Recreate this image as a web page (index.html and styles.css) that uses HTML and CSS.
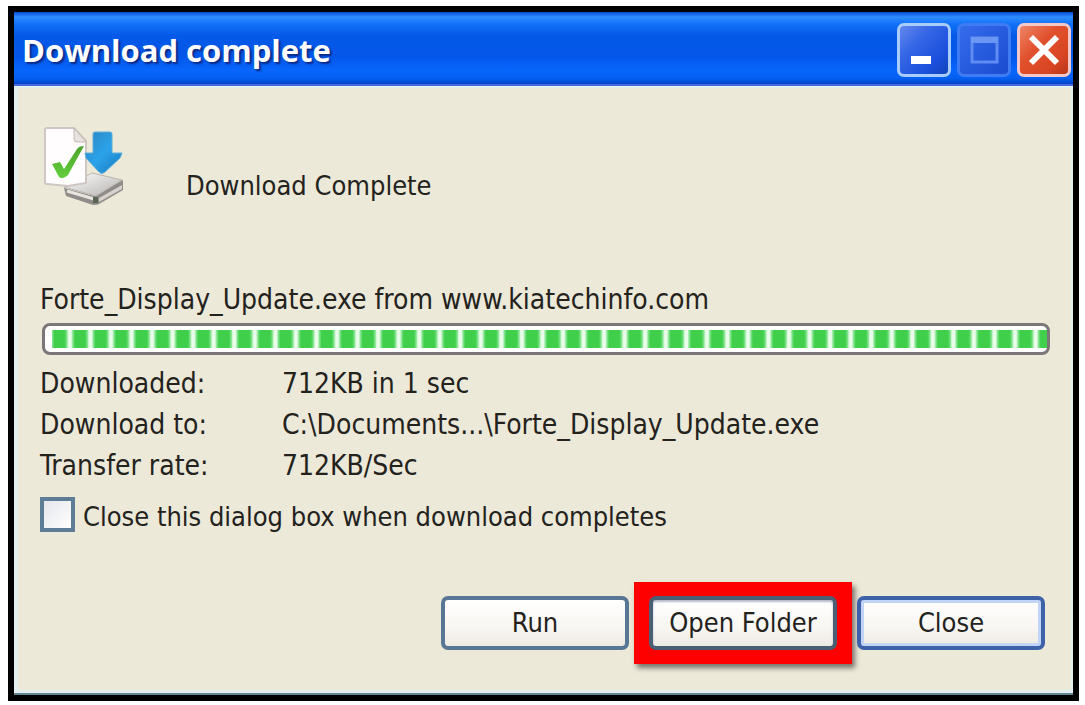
FILE: index.html
```html
<!DOCTYPE html>
<html lang="en">
<head>
<meta charset="utf-8">
<title>Download complete</title>
<link rel="stylesheet" href="styles.css">
</head>
<body>
<main class="window">
  <header class="titlebar">
    <h1 class="title">Download complete</h1>
    <div class="controls">
      <button class="control" type="button" aria-label="Minimize">
        <svg viewBox="0 0 42 42"><rect x="8" y="27" width="20" height="8" fill="#fff"/></svg>
      </button>
      <button class="control control-max" type="button" aria-label="Maximize" disabled>
        <svg viewBox="0 0 42 42"><rect x="9" y="9" width="25" height="24" fill="none" stroke="#5f8bf2" stroke-width="3"/><rect x="8" y="8" width="27" height="6" fill="#6a96f4"/></svg>
      </button>
      <button class="control control-close" type="button" aria-label="Close window">
        <svg viewBox="0 0 42 42"><path d="M8 8L34 34M34 8L8 34" stroke="#fff" stroke-width="6" fill="none"/></svg>
      </button>
    </div>
  </header>
  <div class="body">
    <section class="status">
      <svg class="status-icon" viewBox="0 0 84 84" aria-hidden="true">
        <defs>
          <linearGradient id="arrow" x1="0" y1="0" x2="1" y2="1"><stop offset="0" stop-color="#2c83bd"/><stop offset=".5" stop-color="#2ba3ea"/><stop offset="1" stop-color="#1b78bd"/></linearGradient>
          <linearGradient id="check" x1="0" y1="0" x2="0" y2="1"><stop offset="0" stop-color="#4da32c"/><stop offset="1" stop-color="#63cf3c"/></linearGradient>
          <linearGradient id="drive" x1="0" y1="0" x2="1" y2="1"><stop offset="0" stop-color="#ffffff"/><stop offset="1" stop-color="#b5b2b0"/></linearGradient>
        </defs>
        <path d="M22 64L52 72L81 56V66L57 80Q53 82 48 80L24 72Z" fill="#8f8b88"/>
        <path d="M22 63L50 49L80 56L54 72Z" fill="url(#drive)" stroke="#b9b3ae"/>
        <path d="M25 67L52 75" stroke="#e8e4e0" stroke-width="3"/>
        <path d="M57 74L80 61V65L57 78Z" fill="#d7d2ce"/>
        <rect x="51" y="73" width="5" height="6" fill="#596454"/>
        <path d="M3 6Q3 4 5 4H32L44 17V59L26 62L5 60Q3 60 3 58Z" fill="#fffdfd" stroke="#cfc5c2" stroke-width="2"/>
        <path d="M32 4V15Q32 18 35 18H44Z" fill="#e7e2df" stroke="#c2b8b4"/>
        <path d="M10 40L18 38L22 45L35 25Q37 22 42 22L26 51Q21 56 17 53Z" fill="url(#check)"/>
        <path d="M51 10Q51 8 53 8H68Q70 8 70 10V29H80L78 34L63 48Q60 51 57 48L44 34L43 29H51Z" fill="url(#arrow)" stroke="#5eafd9"/>
      </svg>
      <p class="status-text">Download Complete</p>
    </section>
    <label class="source" for="progress">Forte_Display_Update.exe from www.kiatechinfo.com</label>
    <progress class="progress" id="progress" value="100" max="100"></progress>
    <dl class="details">
      <dt>Downloaded:</dt><dd>712KB in 1 sec</dd>
      <dt>Download to:</dt><dd>C:\Documents...\Forte_Display_Update.exe</dd>
      <dt>Transfer rate:</dt><dd>712KB/Sec</dd>
    </dl>
    <div class="option">
      <input class="checkbox" type="checkbox" id="autoclose">
      <label for="autoclose">Close this dialog box when download completes</label>
    </div>
    <footer class="actions">
      <button class="button" type="button">Run</button>
      <div class="highlight"><button class="button button-open" type="button">Open Folder</button></div>
      <button class="button button-default" type="button">Close</button>
    </footer>
  </div>
</main>
</body>
</html>
```
FILE: styles.css
```css
* {
  box-sizing: border-box;
}

body {
  margin: 0;
  padding: 6px 6px 4px 8px;
  min-height: 100vh;
  display: flex;
  background: #fff;
  color: #24221d;
  font-family: "DejaVu Sans Condensed", "DejaVu Sans", sans-serif;
  font-size: 27px;
  line-height: 40px;
}

.window {
  flex: 1;
  display: flex;
  flex-direction: column;
  border: 6px solid #000;
  background: #ece9d8;
}

.titlebar {
  display: flex;
  align-items: center;
  justify-content: space-between;
  height: 74px;
  padding: 4px 2px 0 8px;
  border-bottom: 2px solid #4a66dc;
  background: linear-gradient(#0a4bd4 0, #2e8dff 5px, #1271f8 12px, #0459e6 24px, #0457ea 44px, #0766fc 58px, #0560f4 66px, #0444c8 72px);
}

.title {
  margin: 0;
  color: #fff;
  font-family: "Open Sans", "Noto Sans", sans-serif;
  font-size: 31px;
  font-weight: 700;
  line-height: 40px;
  text-shadow: 2px 2px 2px #0a2a86;
}

.controls {
  display: flex;
  gap: 6px;
}

.control {
  width: 54px;
  height: 54px;
  padding: 3px;
  border: 3px solid #a9cdfb;
  border-radius: 7px;
  background: linear-gradient(135deg, #6487ee 0, #3566e6 35%, #1a4fdc 75%, #1244b8 100%);
}

.control svg {
  display: block;
  width: 42px;
  height: 42px;
}

.control-max {
  border-color: #3d7cf2;
  background: linear-gradient(135deg, #356cec, #1a4bd0);
}

.control-close {
  border-color: #f3c8c8;
  background: linear-gradient(135deg, #ee8468 0, #e1502c 40%, #d94522 75%, #b8371a 100%);
}

.body {
  flex: 1;
  display: flex;
  flex-direction: column;
  padding: 36px 22px 26px 22px;
  border: solid #e2f0f2;
  border-width: 2px 2px 3px 4px;
  box-shadow: 0 2px 0 #668493;
  margin-bottom: 2px;
}

.status {
  display: flex;
  align-items: flex-end;
  gap: 60px;
  padding-left: 2px;
}

.status-icon {
  width: 84px;
  height: 84px;
}

.status-text {
  margin: 0;
  padding-bottom: 2px;
}

.source {
  margin-top: 72px;
  font-size: 28px;
}

.progress {
  appearance: none;
  width: calc(100% - 1px);
  height: 32px;
  margin: 3px 0 9px 2px;
  padding: 4px 0 4px 7px;
  border: 3px solid #7c7579;
  border-radius: 8px;
  background: #fff;
}

.progress::-webkit-progress-bar {
  background: transparent;
}

.progress::-webkit-progress-value {
  background: linear-gradient(90deg, #8fe79a 0, #3fcf4b 12%, #3fcf4b 62%, #8fe79a 74%, #eafdea 80%, #eafdea 94%, #8fe79a 100%) 0 0 / calc(100% / 48.4) 100%;
}

.details {
  display: grid;
  grid-template-columns: 242px 1fr;
  row-gap: 1px;
  margin: 0;
  font-size: 28px;
}

.details dd {
  margin: 0;
}

.option {
  display: flex;
  align-items: flex-start;
  gap: 8px;
  margin-top: 11px;
}

.checkbox {
  appearance: none;
  width: 35px;
  height: 35px;
  margin: 0;
  border: 4px solid #5d7c96;
  background: linear-gradient(135deg, #e4e6ec, #fff);
}

.actions {
  display: flex;
  justify-content: flex-end;
  align-items: center;
  gap: 5px;
  margin-top: auto;
  padding-right: 4px;
}

.button {
  width: 188px;
  height: 54px;
  padding: 0;
  border: 4px solid #587794;
  border-radius: 7px;
  background: linear-gradient(#fff, #f8f6f2 60%, #eeeae4);
  color: inherit;
  font: inherit;
}

.highlight {
  display: flex;
  padding: 14px 15px;
  background: #f00;
  box-shadow: 3px 4px 5px #77736a;
}

.button-open {
  border-color: #4a5e74;
  box-shadow: inset 0 2px 2px #b6b9cc;
}

.button-default {
  border-color: #3d62a8;
  box-shadow: inset 0 0 0 3px #c3d5f6;
}
```
